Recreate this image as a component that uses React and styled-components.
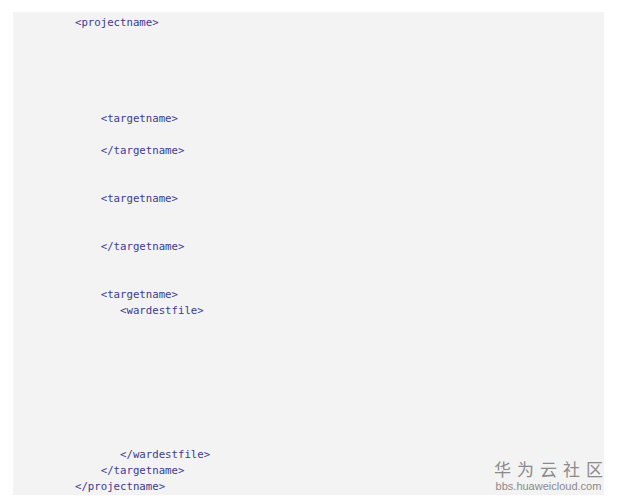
import React from 'react'
import styled, { createGlobalStyle } from 'styled-components'

const GlobalStyle = createGlobalStyle`
body {
    margin: 0;
    background: #ffffff;
}
`

const Page = styled.div`
width: 617px;
height: 501px;
padding: 12px 13px 6px 13px;
box-sizing: border-box;
position: relative;
`

const Panel = styled.div`
width: 591px;
height: 483px;
background-color: #f3f3f3;
box-sizing: border-box;
padding: 3px 0 0 0;
`

const Code = styled.pre`
margin: 0;
padding-left: 62px;
font-family: "DejaVu Sans Mono", "Liberation Mono", monospace;
font-size: 10.7px;
line-height: 16px;
color: #3b3b8c;
`

const Watermark = styled.div`
position: absolute;
right: 14px;
bottom: 8px;
display: flex;
flex-direction: column;
align-items: center;
color: #8a8a8a;
`

const Brand = styled.div`
font-family: "Noto Sans CJK SC", sans-serif;
font-size: 17px;
letter-spacing: 6px;
margin-right: -6px;
line-height: 18px;
margin-bottom: 2px;
`

const Url = styled.div`
font-family: "Liberation Sans", sans-serif;
font-size: 11px;
line-height: 13px;
`

const lines = [
    '<projectname>',
    '', '', '', '', '',
    '    <targetname>',
    '',
    '    </targetname>',
    '', '',
    '    <targetname>',
    '', '',
    '    </targetname>',
    '', '',
    '    <targetname>',
    '       <wardestfile>',
    '', '', '', '', '', '', '', '',
    '       </wardestfile>',
    '    </targetname>',
    '</projectname>',
]

const App = () => {
    return (
        <>
            <GlobalStyle />
            <Page>
                <Panel>
                    <Code>{lines.join('\n')}</Code>
                </Panel>
                <Watermark>
                    <Brand>华为云社区</Brand>
                    <Url>bbs.huaweicloud.com</Url>
                </Watermark>
            </Page>
        </>
    )
}

export default App
